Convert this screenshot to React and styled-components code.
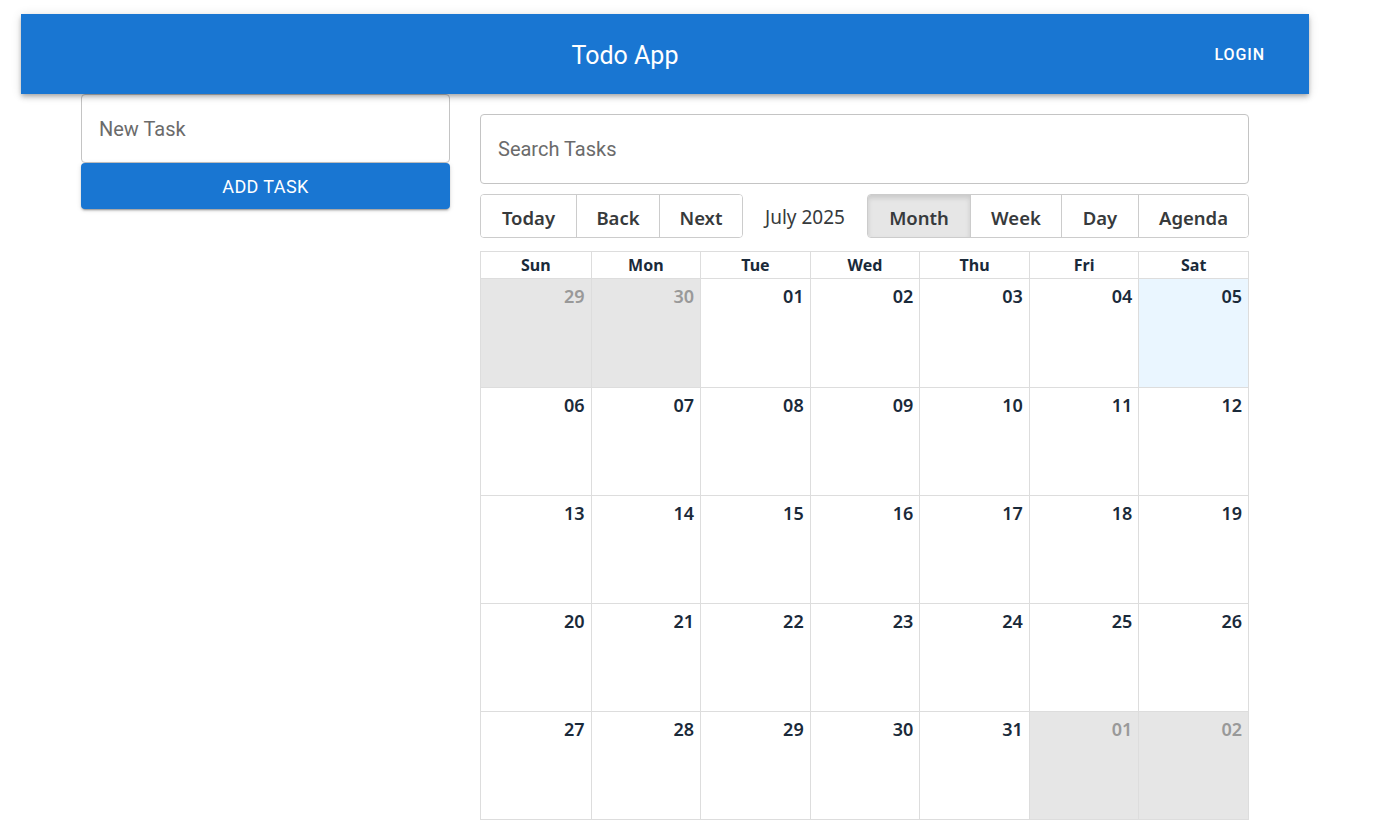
import React from "react";
import styled, { createGlobalStyle } from "styled-components";

const Global = createGlobalStyle`
  html, body { margin: 0; padding: 0; background: #fff; }
  body { font-family: Roboto, "Noto Sans", sans-serif; }
  * { box-sizing: border-box; }
`;

const Page = styled.div`
  width: 1288px;
  margin: 14px 0 0 21px;
`;

const AppBar = styled.header`
  height: 80px;
  background: #1976d2;
  color: #fff;
  display: grid;
  grid-template-columns: 1fr auto 1fr;
  align-items: center;
  box-shadow: 0px 2px 4px -1px rgba(0,0,0,0.2), 0px 4px 5px 0px rgba(0,0,0,0.14), 0px 1px 10px 0px rgba(0,0,0,0.12);
  position: relative;
  z-index: 1;
`;

const Title = styled.h1`
  grid-column: 2;
  margin: 0;
  font-family: Roboto, sans-serif;
  font-weight: 400;
  font-size: 25px;
  transform: translate(-40px, 1px);
`;

const Login = styled.button`
  grid-column: 3;
  justify-self: end;
  margin-right: 36px;
  background: none;
  border: none;
  color: #fff;
  font-family: Roboto, sans-serif;
  font-weight: 500;
  font-size: 16px;
  letter-spacing: 0.9px;
  padding: 6px 8px;
  text-transform: uppercase;
`;

const Content = styled.main`
  display: grid;
  grid-template-columns: 369px 769px;
  column-gap: 30px;
  padding: 0 60px;
  align-items: start;
`;

const Left = styled.section`
  display: flex;
  flex-direction: column;
  gap: 0;
`;

const Field = styled.div`
  height: ${p => p.$h}px;
  border: 1px solid #c4c4c4;
  border-radius: 4px;
  display: flex;
  align-items: center;
  padding-left: 17px;
  font-family: Roboto, sans-serif;
  font-size: 20px;
  color: #6b6b6b;
  background: #fff;
`;

const AddButton = styled.button`
  height: 46px;
  border: none;
  border-radius: 4px;
  background: #1976d2;
  color: #fff;
  font-family: Roboto, sans-serif;
  font-weight: 400;
  font-size: 18px;
  letter-spacing: 0.4px;
  text-transform: uppercase;
  box-shadow: 0px 3px 1px -2px rgba(0,0,0,0.2), 0px 2px 2px 0px rgba(0,0,0,0.14), 0px 1px 5px 0px rgba(0,0,0,0.12);
`;

const Right = styled.section`
  padding-top: 20px;
  display: flex;
  flex-direction: column;
`;

const Toolbar = styled.div`
  margin-top: 10px;
  height: 44px;
  display: flex;
  align-items: stretch;
  justify-content: space-between;
  font-family: "Noto Sans", "Open Sans", sans-serif;
  color: #373a3c;
`;

const Group = styled.div`
  display: flex;
  border: 1px solid #ccc;
  border-radius: 4px;
  overflow: hidden;
`;

const TButton = styled.button`
  width: ${p => p.$w}px;
  border: none;
  border-left: ${p => (p.$first ? "none" : "1px solid #ccc")};
  background: ${p => (p.$active ? "#e6e6e6" : "#fff")};
  box-shadow: ${p => (p.$active ? "inset 0 3px 5px rgba(0,0,0,0.125)" : "none")};
  font-family: "Noto Sans", sans-serif;
  font-weight: 600;
  font-size: 18.5px;
  color: #373a3c;
  padding: 3px 0 0;
`;

const Label = styled.span`
  flex: 1;
  display: flex;
  align-items: center;
  justify-content: center;
  font-size: 19px;
  font-weight: 400;
  padding: 2px 2px 0 2px;
`;

const Month = styled.div`
  margin-top: 13px;
  display: grid;
  grid-template-columns: repeat(7, 1fr);
  grid-template-rows: 27px repeat(5, 108px);
  border: 1px solid #ddd;
  width: 769px;
  font-family: "Noto Sans", "Open Sans", sans-serif;
`;

const Head = styled.div`
  border-left: ${p => (p.$first ? "none" : "1px solid #ddd")};
  border-bottom: 1px solid #ddd;
  text-align: center;
  font-weight: 700;
  font-size: 16px;
  line-height: 27px;
  color: #1a2a3a;
`;

const Cell = styled.div`
  border-left: ${p => (p.$first ? "none" : "1px solid #ddd")};
  border-top: ${p => (p.$topRow ? "none" : "1px solid #ddd")};
  background: ${p => (p.$off ? "#e6e6e6" : p.$today ? "#eaf6ff" : "#fff")};
  text-align: right;
  padding: 4px 6px 0 0;
  font-size: 18px;
  font-weight: 600;
  color: ${p => (p.$off ? "#999" : "#1a2a3a")};
  line-height: 26px;
`;

const days = ["Sun", "Mon", "Tue", "Wed", "Thu", "Fri", "Sat"];

const cells = [];
for (const d of [29, 30]) cells.push({ n: d, off: true });
for (let d = 1; d <= 31; d++) cells.push({ n: d, off: false, today: d === 5 });
cells.push({ n: 1, off: true }, { n: 2, off: true });

const pad = n => String(n).padStart(2, "0");

export default function App() {
  return (
    <>
      <Global />
      <Page>
        <AppBar>
          <Title>Todo App</Title>
          <Login>Login</Login>
        </AppBar>
        <Content>
          <Left>
            <Field $h={69}>New Task</Field>
            <AddButton>Add Task</AddButton>
          </Left>
          <Right>
            <Field $h={70}>Search Tasks</Field>
            <Toolbar>
              <Group>
                <TButton $first $w={95}>Today</TButton>
                <TButton $w={83}>Back</TButton>
                <TButton $w={83}>Next</TButton>
              </Group>
              <Label>July 2025</Label>
              <Group>
                <TButton $first $active $w={102}>Month</TButton>
                <TButton $w={91}>Week</TButton>
                <TButton $w={77}>Day</TButton>
                <TButton $w={110}>Agenda</TButton>
              </Group>
            </Toolbar>
            <Month>
              {days.map((d, i) => (
                <Head key={d} $first={i === 0}>{d}</Head>
              ))}
              {cells.map((c, i) => (
                <Cell
                  key={i}
                  $first={i % 7 === 0}
                  $topRow={i < 7}
                  $off={c.off}
                  $today={c.today}
                >
                  {pad(c.n)}
                </Cell>
              ))}
            </Month>
          </Right>
        </Content>
      </Page>
    </>
  );
}
